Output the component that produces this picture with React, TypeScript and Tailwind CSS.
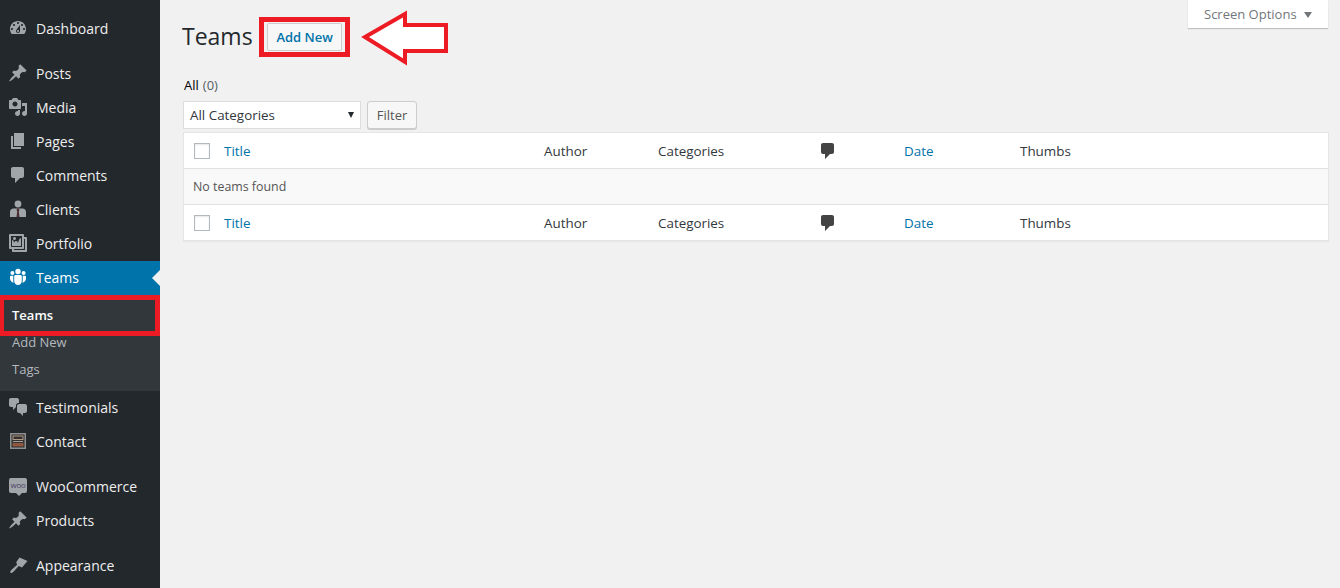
const iconPaths: Record<string, string> = {
  dashboard:
    "M3.76 16h12.48c1.1-1.37 1.76-3.11 1.76-5 0-4.42-3.58-8-8-8s-8 3.58-8 8c0 1.89.66 3.63 1.76 5zM10 4c.55 0 1 .45 1 1s-.45 1-1 1-1-.45-1-1 .45-1 1-1zM6 6c.55 0 1 .45 1 1s-.45 1-1 1-1-.45-1-1 .45-1 1-1zm8 0c.55 0 1 .45 1 1s-.45 1-1 1-1-.45-1-1 .45-1 1-1zm-5.37 5.55L12 7v6c0 1.1-.9 2-2 2s-2-.9-2-2c0-.57.24-1.08.63-1.45zM4 10c.55 0 1 .45 1 1s-.45 1-1 1-1-.45-1-1 .45-1 1-1zm12 0c.55 0 1 .45 1 1s-.45 1-1 1-1-.45-1-1 .45-1 1-1zm-5 3c0-.55-.45-1-1-1s-1 .45-1 1 .45 1 1 1 1-.45 1-1z",
  pin: "M10.44 3.02l1.82-1.82 6.36 6.35-1.83 1.82c-1.05-.68-2.48-.57-3.41.36l-.75.75c-.92.93-1.04 2.35-.35 3.41l-1.83 1.82-2.41-2.41-2.8 2.79c-.42.42-3.38 2.71-3.8 2.29s1.86-3.39 2.28-3.81l2.79-2.79L4.1 9.36l1.83-1.82c1.05.69 2.48.57 3.4-.36l.75-.75c.93-.92 1.05-2.35.36-3.41z",
  media:
    "M13 11V4c0-.55-.45-1-1-1h-1.67L9 1H5L3.67 3H2c-.55 0-1 .45-1 1v7c0 .55.45 1 1 1h10c.55 0 1-.45 1-1zM7 4.5c1.38 0 2.5 1.12 2.5 2.5S8.38 9.5 7 9.5 4.5 8.38 4.5 7 5.62 4.5 7 4.5zM14 6h5v10.5c0 1.38-1.12 2.5-2.5 2.5S14 17.88 14 16.5s1.12-2.5 2.5-2.5c.17 0 .34.02.5.05V9h-3V6zm-4 8.05V13h2v3.5c0 1.38-1.12 2.5-2.5 2.5S7 17.88 7 16.5 8.12 14 9.5 14c.17 0 .34.02.5.05z",
  pages: "M6 15V2h10v13H6zm-1 1h8v2H3V5h2v11z",
  comment:
    "M5 2h9c1.1 0 2 .9 2 2v7c0 1.1-.9 2-2 2h-2l-5 5v-5H5c-1.1 0-2-.9-2-2V4c0-1.1.9-2 2-2z",
  portfolio:
    "M16 4h1.96c.57 0 1.04.47 1.04 1.04v12.92c0 .57-.47 1.04-1.04 1.04H5.04C4.47 19 4 18.53 4 17.96V16H2.04C1.47 16 1 15.53 1 14.96V2.04C1 1.47 1.47 1 2.04 1h12.92c.57 0 1.04.47 1.04 1.04V4zM3 14h11V3H3v11zm5-8.5C8 4.67 7.33 4 6.5 4S5 4.67 5 5.5 5.67 7 6.5 7 8 6.33 8 5.5zm2 4.5s1-5 3-5v8H4V7c2 0 2 3 2 3s.33-2 2-2 2 2 2 2zm7 7V6h-1v8.96c0 .57-.47 1.04-1.04 1.04H6v1h11z",
  teams:
    "M10 1.800a2.700 2.700 0 1 1 0 5.400 2.700 2.700 0 0 1 0-5.400zM4.400 4a2 2 0 1 1 0 4 2 2 0 0 1 0-4zm11.200 0a2 2 0 1 1 0 4 2 2 0 0 1 0-4zM7.600 8h4.800c.8 0 1.400.6 1.400 1.400V14c0 1.900-1.500 4-3.800 4s-3.800-2.100-3.800-4V9.400C6.200 8.600 6.800 8 7.600 8zM3 8.800h2.300v5.200c0 .5.100 1.100.300 1.700C3.700 15.300 2 13.600 2 11.500V9.800c0-.6.400-1 1-1zm11.700 0H17c.6 0 1 .4 1 1v1.700c0 2.100-1.700 3.800-3.600 4.200.2-.6.300-1.200.300-1.700z",
  chat: "M11 6h-.82C9.070 6 8 7.200 8 8.160V10l-3 3v-3H3c-1.100 0-2-.9-2-2V3c0-1.100.9-2 2-2h6c1.100 0 2 .9 2 2v3zm0 1h6c1.100 0 2 .9 2 2v5c0 1.100-.9 2-2 2h-2v3l-3-3h-1c-1.100 0-2-.9-2-2V9c0-1.100.9-2 2-2z",
  appearance:
    "M11.500 2.500l8 3.500-5.500 6.500-3.300-1.600-5 5.600c-1 1.100-2.400 2-3.200 1.300-.7-.8.2-2.200 1.300-3.200l5.300-4.800-.9-2.600z",
};

function MenuIcon({ name, className = "fill-[#a0a5aa]" }: { name: string; className?: string }) {
  return (
    <svg viewBox="0 0 20 20" className={`h-5 w-5 ${className}`}>
      <path d={iconPaths[name]} fillRule="evenodd" />
    </svg>
  );
}

function ClientIcon() {
  return (
    <svg viewBox="0 0 20 20" className="h-5 w-5">
      <circle cx="10" cy="5" r="3.400" fill="#a0a5aa" />
      <path d="M5.400 9.500h9.200c1.900 0 3.400 1.500 3.400 3.400V18H2v-5.100c0-1.900 1.500-3.400 3.400-3.400z" fill="#a0a5aa" />
      <path d="M9 9.500h2l.4 1.800-.6 1.200.7 5.500h-3l.7-5.500-.6-1.200z" fill="#4a2f33" />
    </svg>
  );
}

function ContactIcon() {
  return (
    <svg viewBox="0 0 20 20" className="h-5 w-5">
      <rect x="2" y="2" width="16" height="16" fill="#8d8f90" />
      <rect x="3.500" y="3.500" width="13" height="13" fill="#34302f" />
      <rect x="5" y="5" width="10" height="3.500" fill="#34302f" stroke="#b09a88" />
      <rect x="5" y="10" width="10" height="1" fill="#a5a09c" />
      <rect x="5" y="12.500" width="10" height="2.500" fill="#8f4f38" stroke="#a87452" strokeWidth=".6" />
    </svg>
  );
}

function WooIcon() {
  return (
    <div className="relative -mt-[2px] flex h-[15px] w-[18px] items-center justify-center rounded-[2px] bg-[#a0a5aa] after:absolute after:left-[7px] after:top-[15px] after:h-0 after:w-0 after:border-x-[3px] after:border-t-[3px] after:border-x-transparent after:border-t-[#a0a5aa]">
      <span className="text-[8px] leading-none tracking-[-0.3px] text-[#4f4468]">woo</span>
    </div>
  );
}

function MenuItem({ icon, label, gap }: { icon: React.ReactNode; label: string; gap?: boolean }) {
  return (
    <div className={`flex h-[34px] items-center text-[14px] text-[#eeeeee] ${gap ? "mt-[11px]" : ""}`}>
      <div className="flex w-[36px] shrink-0 justify-center">{icon}</div>
      <span>{label}</span>
    </div>
  );
}

function Sidebar() {
  return (
    <aside className="w-[160px] shrink-0 overflow-hidden bg-[#23282d] pt-[11px]">
      <MenuItem icon={<MenuIcon name="dashboard" />} label="Dashboard" />
      <MenuItem gap icon={<MenuIcon name="pin" />} label="Posts" />
      <MenuItem icon={<MenuIcon name="media" />} label="Media" />
      <MenuItem icon={<MenuIcon name="pages" />} label="Pages" />
      <MenuItem icon={<MenuIcon name="comment" />} label="Comments" />
      <MenuItem icon={<ClientIcon />} label="Clients" />
      <MenuItem icon={<MenuIcon name="portfolio" />} label="Portfolio" />
      <div className="relative mt-px flex h-[34px] items-center bg-[#0073aa] pb-[2px] text-[14px] text-white">
        <div className="flex w-[36px] shrink-0 justify-center">
          <MenuIcon name="teams" className="fill-white" />
        </div>
        <span>Teams</span>
        <div className="absolute right-0 top-[9px] h-0 w-0 border-y-[8px] border-r-[8px] border-y-transparent border-r-[#f1f1f1]" />
      </div>
      <div className="relative h-[96px] bg-[#32373c] text-[13px]">
        <div className="flex h-[27px] translate-y-[7px] items-center pl-[12px] font-semibold text-white">Teams</div>
        <div className="flex h-[27px] translate-y-[7px] items-center pl-[12px] text-[#b4b9be]">Add New</div>
        <div className="flex h-[27px] translate-y-[7px] items-center pl-[12px] text-[#b4b9be]">Tags</div>
        <div className="absolute left-0 top-0 h-[41px] w-[160px] border-y-[5px] border-l-[4px] border-r-[5px] border-[#ed1c24]" />
      </div>
      <div className="-mt-px">
        <MenuItem icon={<MenuIcon name="chat" />} label="Testimonials" />
        <MenuItem icon={<ContactIcon />} label="Contact" />
        <MenuItem gap icon={<WooIcon />} label="WooCommerce" />
        <MenuItem icon={<MenuIcon name="pin" />} label="Products" />
        <MenuItem gap icon={<MenuIcon name="appearance" />} label="Appearance" />
      </div>
    </aside>
  );
}

function Checkbox() {
  return <div className="h-4 w-4 border border-[#b4b9be] bg-white shadow-[inset_0_1px_2px_rgba(0,0,0,0.1)]" />;
}

function HeaderRow() {
  return (
    <div className="grid h-[35px] grid-cols-[40px_320px_114px_163px_83px_116px_1fr] items-center text-[13.4px]">
      <div className="pl-[10px]">
        <Checkbox />
      </div>
      <span className="pt-[2px] text-[#0073aa]">Title</span>
      <span className="pt-[2px] text-[#32373c]">Author</span>
      <span className="pt-[2px] text-[#32373c]">Categories</span>
      <svg viewBox="0 0 20 20" className="h-5 w-5 -translate-x-[3px] fill-[#444444]">
        <path d={iconPaths.comment} />
      </svg>
      <span className="pt-[2px] text-[#0073aa]">Date</span>
      <span className="pt-[2px] text-[#32373c]">Thumbs</span>
    </div>
  );
}

export default function App() {
  return (
    <div className="flex h-[588px] w-[1340px] overflow-hidden bg-[#f1f1f1] font-['Open_Sans',sans-serif]">
      <Sidebar />
      <main className="relative min-w-0 flex-1 pl-[23px] pr-[11px]">
        {/* Screen options tab */}
        <div className="absolute right-[12px] top-0 flex h-[28px] w-[140px] items-center bg-white pl-[16px] pt-px text-[13px] text-[#72777c] shadow-[0_1px_1px_rgba(0,0,0,0.2)]">
          Screen Options
          <div className="ml-[7px] h-0 w-0 border-x-[4px] border-t-[6px] border-x-transparent border-t-[#72777c]" />
        </div>

        <div className="flex h-[72px] items-start pt-[23px]">
          <h1 className="ml-[-1px] h-[28px] text-[23px] leading-[27px] text-[#23282d]">Teams</h1>
          <button className="ml-[14px] flex h-[28px] w-[75px] items-center justify-center rounded-[2px] border border-[#cccccc] bg-[#f7f7f7] pl-px pt-[2px] text-[13px] font-semibold text-[#0073aa]">
            Add New
          </button>
        </div>

        <div className="flex h-[29px] items-start pl-[1px] pt-[4px] text-[13px] leading-[18px]">
          <span className="font-medium text-black">All</span>
          <span className="ml-1 text-[#555d66]">(0)</span>
        </div>

        <div className="flex h-[31px] items-start gap-[6px]">
          <div className="flex h-[28px] w-[178px] items-center justify-between border border-[#dddddd] bg-white px-[6px] text-[13.4px] text-[#32373c]">
            All Categories
            <div className="h-0 w-0 border-x-[3.5px] border-t-[6px] border-x-transparent border-t-[#23282d]" />
          </div>
          <button className="flex h-[28px] w-[50px] items-center justify-center rounded-[3px] border border-[#cccccc] bg-[#f7f7f7] pt-px text-[13px] text-[#555555] shadow-[0_1px_0_#cccccc]">
            Filter
          </button>
        </div>

        <div className="border border-[#e5e5e5] bg-white shadow-[0_1px_1px_rgba(0,0,0,0.04)]">
          <HeaderRow />
          <div className="flex h-[37px] items-center border-y border-[#e1e1e1] bg-[#f9f9f9] pl-[9px] pt-[2px] text-[12.4px] text-[#555555]">
            No teams found
          </div>
          <HeaderRow />
        </div>

        {/* red annotations drawn over the page */}
        <div className="absolute left-[99px] top-[17px] h-[40px] w-[91px] border-[5px] border-[#ed1c24]" />
        <svg viewBox="0 0 87 56" className="absolute left-[201px] top-[10px] h-[56px] w-[87px]">
          <polygon points="4,27 44,4 44,15 85,15 85,41 44,41 44,52" fill="#ffffff" stroke="#ed1c24" strokeWidth="4" strokeLinejoin="miter" />
        </svg>
      </main>
    </div>
  );
}
